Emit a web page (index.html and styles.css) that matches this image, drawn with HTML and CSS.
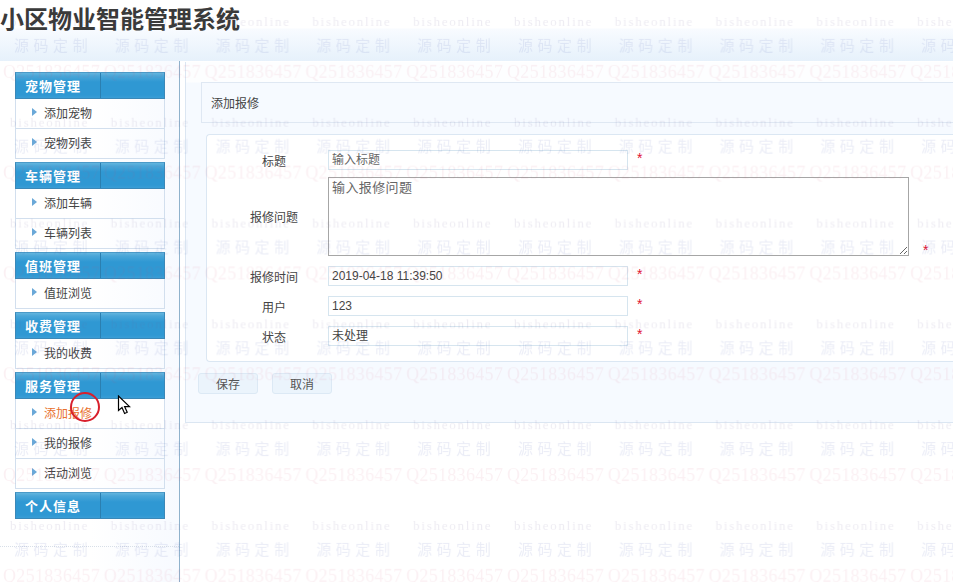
FILE: index.html
```html
<!DOCTYPE html>
<html lang="zh-CN">
<head>
<meta charset="utf-8">
<title>小区物业智能管理系统</title>
<link rel="stylesheet" href="styles.css">
</head>
<body>
<div class="page">
  <header class="topbar"><h1 class="brand">小区物业智能管理系统</h1></header>
  <div class="layout">
    <aside class="sidebar">
      <nav class="nav">
        <section class="group">
          <h2 class="group-title"><span>宠物管理</span></h2>
          <a class="item">添加宠物</a>
          <a class="item">宠物列表</a>
        </section>
        <section class="group">
          <h2 class="group-title"><span>车辆管理</span></h2>
          <a class="item">添加车辆</a>
          <a class="item">车辆列表</a>
        </section>
        <section class="group">
          <h2 class="group-title"><span>值班管理</span></h2>
          <a class="item">值班浏览</a>
        </section>
        <section class="group">
          <h2 class="group-title"><span>收费管理</span></h2>
          <a class="item">我的收费</a>
        </section>
        <section class="group">
          <h2 class="group-title"><span>服务管理</span></h2>
          <a class="item active">添加报修</a>
          <a class="item">我的报修</a>
          <a class="item">活动浏览</a>
        </section>
        <section class="group">
          <h2 class="group-title"><span>个人信息</span></h2>
        </section>
      </nav>
    </aside>
    <main class="main">
      <div class="panel">
        <div class="panel-title">添加报修</div>
        <form class="form">
          <div class="row">
            <label class="label">标题</label>
            <input class="field" type="text" placeholder="输入标题">
            <span class="star">*</span>
          </div>
          <div class="row">
            <label class="label">报修问题</label>
            <textarea class="area" placeholder="输入报修问题"></textarea>
            <span class="star star-area">*</span>
          </div>
          <div class="row">
            <label class="label">报修时间</label>
            <input class="field" type="text" value="2019-04-18 11:39:50">
            <span class="star">*</span>
          </div>
          <div class="row">
            <label class="label">用户</label>
            <input class="field" type="text" value="123">
            <span class="star">*</span>
          </div>
          <div class="row">
            <label class="label">状态</label>
            <input class="field field-cjk" type="text" value="未处理">
            <span class="star">*</span>
          </div>
        </form>
        <div class="actions">
          <button class="btn" type="button">保存</button>
          <button class="btn" type="button">取消</button>
        </div>
      </div>
    </main>
  </div>

  <svg class="watermark" width="953" height="582" aria-hidden="true">
    <defs>
      <pattern id="tile" patternUnits="userSpaceOnUse" width="100.8" height="100.8">
        <text class="wm-a" x="10" y="26">bisheonline</text>
        <text class="wm-b" x="14" y="51">源码定制</text>
        <text class="wm-c" x="3" y="78">Q251836457</text>
      </pattern>
    </defs>
    <rect width="953" height="582" fill="url(#tile)"></rect>
  </svg>
  <div class="click-ring"></div>
  <svg class="pointer" width="15" height="20" viewBox="0 0 15 20" aria-hidden="true">
    <path d="M1.5 1 V15.5 L5 12.5 L7.6 18.5 L10.2 17.3 L7.6 11.6 L12.5 11.6 Z" fill="#fff" stroke="#000" stroke-width="1.2" stroke-linejoin="miter"></path>
  </svg>
</div>
</body>
</html>
```
FILE: styles.css
```css
* { box-sizing: border-box; }
html, body { margin: 0; padding: 0; background: #fff; }
body {
  font-family: "Liberation Sans", "Noto Sans CJK SC", sans-serif;
  font-size: 12px;
  color: #444;
}
.page {
  position: relative;
  width: 953px;
  height: 582px;
  overflow: hidden;
}
.topbar {
  height: 61px;
  background: linear-gradient(#fff 28px, #f8fbff 29px, #e6f1fb 61px);
}
.brand {
  margin: 0;
  font-family: "Noto Sans CJK SC", sans-serif;
  font-size: 24px;
  font-weight: 700;
  line-height: 36px;
  color: #3a3a3a;
}
.layout { display: flex; height: 521px; }

.sidebar {
  flex: 0 0 180px;
  border-right: 1px solid #8fb2cc;
  background: linear-gradient(90deg, #fff 50%, #f7faff 100%);
  padding: 11px 14px 0 15px;
}
.nav {
  width: 150px;
  height: 475px;
  position: relative;
}
.nav::after {
  content: "";
  position: absolute;
  left: -15px;
  right: -14px;
  bottom: 0;
  border-bottom: 1px dotted #d8dfe8;
}
.group { margin-bottom: 3px; }
.group-title {
  display: flex;
  height: 27px;
  margin: 0;
  border: 1px solid #3b88b8;
  border-top-color: #4a9ac8;
  background: linear-gradient(#63b5de 0, #4aa6d8 3px, #2f98d3 9px, #2f98d3 22px, #3a9ed6 100%);
  font-family: "Noto Sans CJK SC", sans-serif;
  font-size: 13px;
  font-weight: 700;
  letter-spacing: 1px;
  line-height: 26px;
  color: #fff;
}
.group-title span {
  flex: 0 0 85px;
  padding-left: 9px;
  border-right: 1px solid #2b7fb0;
}
.item {
  position: relative;
  display: block;
  height: 30px;
  padding-left: 28px;
  border: 1px solid #d2dfee;
  border-top: 0;
  font-family: "Noto Sans CJK SC", sans-serif;
  font-size: 12px;
  line-height: 28px;
  color: #444;
}
.item::before {
  content: "";
  position: absolute;
  left: 16px;
  top: 9px;
  border-left: 5px solid #6aa8d8;
  border-top: 4px solid transparent;
  border-bottom: 4px solid transparent;
}
.item.active { background: #fff; color: #e8702e; }

.main { flex: 1; padding: 1px 0 0 5px; min-width: 0; }
.panel {
  width: 800px;
  height: 361px;
  border-left: 1px solid #dbe6f2;
  border-bottom: 1px solid #dbe6f2;
  background: linear-gradient(#fdfeff 20px, #f6faff 21px);
  padding: 20px 0 0 12px;
}
.panel-title {
  height: 41px;
  margin-left: 3px;
  padding-left: 9px;
  border: 1px solid #dfe8f3;
  border-right: 0;
  font-family: "Noto Sans CJK SC", sans-serif;
  line-height: 40px;
  color: #444;
}
.form {
  width: 790px;
  height: 228px;
  margin: 11px 0 0 8px;
  padding: 15px 0 0 20px;
  border: 1px solid #dbe7f3;
  border-right: 0;
  border-radius: 4px 0 0 4px;
  background: #fff;
}
.row {
  display: flex;
  align-items: center;
  margin-bottom: 10px;
}
.row:first-child { margin-bottom: 7px; }
.label {
  flex: 0 0 94px;
  margin-right: 7px;
  text-align: center;
  font-family: "Noto Sans CJK SC", sans-serif;
  font-size: 12px;
  color: #444;
}
.field {
  width: 300px;
  height: 20px;
  padding: 0 3px;
  border: 1px solid #d6e5ef;
  background: #fff;
  font-family: "Liberation Sans", "Noto Sans CJK SC", sans-serif;
  font-size: 12px;
  color: #444;
  outline: 0;
}
.field-cjk { padding-bottom: 3px; }
.field::placeholder, .area::placeholder { color: #666; opacity: 1; }
.area {
  display: block;
  width: 581px;
  height: 79px;
  padding: 0 3px;
  margin: 0;
  border: 1px solid #a6a6a6;
  background: #fff;
  font-family: "Noto Sans CJK SC", sans-serif;
  font-size: 13px;
  line-height: 17px;
  letter-spacing: .4px;
  outline: 0;
}
.star {
  margin: 0 0 4px 9px;
  font-size: 14px;
  line-height: 16px;
  color: #e01030;
}
.star-area { margin: 0 0 -2px 14px; align-self: flex-end; }

.actions { display: flex; gap: 14px; margin-top: 11px; }
.btn {
  width: 60px;
  height: 21px;
  padding: 0;
  border: 1px solid #dce9f5;
  border-radius: 3px;
  background: #ebf4fc;
  font-family: "Noto Sans CJK SC", sans-serif;
  font-size: 12px;
  color: #555;
}

.watermark { position: absolute; left: 0; top: 0; pointer-events: none; }
.wm-a {
  font-family: "Liberation Serif", serif;
  font-size: 13px;
  letter-spacing: 1.75px;
  fill: rgba(110, 90, 150, .12);
}
.wm-b {
  font-family: "Noto Sans CJK SC", sans-serif;
  font-size: 15px;
  font-weight: 400;
  letter-spacing: 4.5px;
  fill: rgba(60, 80, 170, .11);
}
.wm-c {
  font-family: "Liberation Serif", serif;
  font-size: 18px;
  letter-spacing: .3px;
  fill: rgba(205, 60, 100, .08);
}
.click-ring {
  position: absolute;
  left: 70px;
  top: 392px;
  width: 30px;
  height: 30px;
  border: 2px solid #d81f2c;
  border-radius: 50%;
}
.pointer { position: absolute; left: 117px; top: 395px; }
```
